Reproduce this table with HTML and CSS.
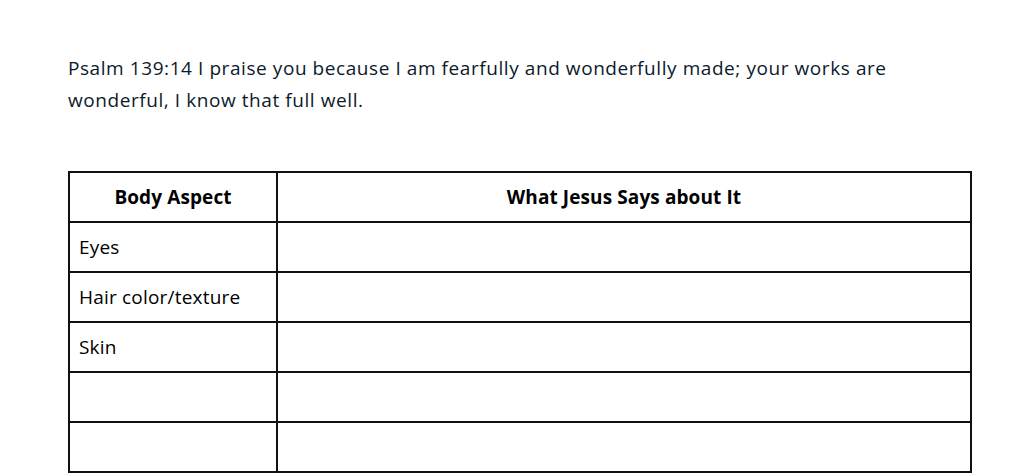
FILE: index.html
```html
<!DOCTYPE html>
<html lang="en">
<head>
<meta charset="utf-8">
<title>Psalm 139:14</title>
<link rel="stylesheet" href="styles.css">
</head>
<body>
<main class="page">
  <p class="verse">Psalm 139:14 I praise you because I am fearfully and wonderfully made; your works are wonderful, I know that full well.</p>
  <table class="grid">
    <colgroup><col class="c1"><col class="c2"></colgroup>
    <thead>
      <tr><th>Body Aspect</th><th>What Jesus Says about It</th></tr>
    </thead>
    <tbody>
      <tr><td>Eyes</td><td></td></tr>
      <tr><td>Hair color/texture</td><td></td></tr>
      <tr><td>Skin</td><td></td></tr>
      <tr><td></td><td></td></tr>
      <tr><td></td><td></td></tr>
      <tr><td></td><td></td></tr>
    </tbody>
  </table>
</main>
</body>
</html>
```
FILE: styles.css
```css
html, body { margin: 0; padding: 0; background: #fff; }
body { font-family: "Open Sans", "Lato", sans-serif; color: #000; overflow: hidden; }
.page { padding: 52px 0 0 68px; }
.verse {
  margin: 0;
  width: 860px;
  font-size: 19px;
  letter-spacing: 0.57px;
  line-height: 32px;
  color: #0c1a2a;
}
.grid {
  margin-top: 55px;
  width: 904px;
  border-collapse: collapse;
  table-layout: fixed;
  font-size: 19px;
  letter-spacing: 0.2px;
}
.c1 { width: 208px; }
.grid th, .grid td {
  border: 2px solid #111;
  height: 50px;
  padding: 0 9px;
  box-sizing: border-box;
  vertical-align: middle;
}
.grid th { text-align: center; font-weight: bold; letter-spacing: 0.1px; }
.grid td { text-align: left; }
```
